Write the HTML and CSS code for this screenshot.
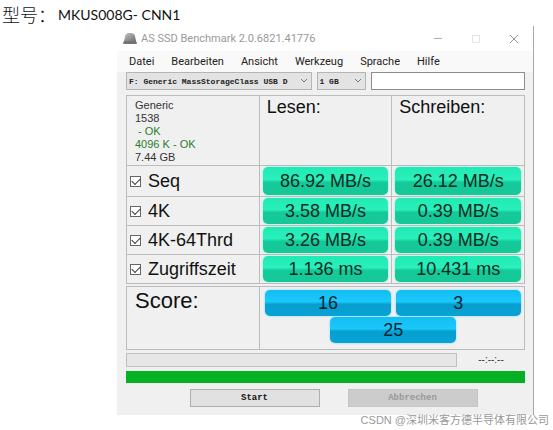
FILE: index.html
```html
<!DOCTYPE html>
<html lang="de">
<head>
    <meta charset="UTF-8">
    <meta name="viewport" content="width=device-width, initial-scale=1.0">
    <title>AS SSD Benchmark</title>
    <link rel="stylesheet" href="styles.css">
</head>
<body>
    <h1 class="model"><span class="model-label" lang="zh">型号：</span>MKUS008G- CNN1</h1>

    <main class="window">
        <!-- Title bar -->
        <header class="titlebar">
            <svg class="app-icon" width="14" height="12" viewBox="0 0 14 12" aria-hidden="true">
                <defs>
                    <linearGradient id="disk" x1="0" y1="0" x2="1" y2="1">
                        <stop offset="0" stop-color="#c4c4c4"/>
                        <stop offset="1" stop-color="#707070"/>
                    </linearGradient>
                </defs>
                <path d="M2 3 Q3 0 6 0 H8 Q11 0 12 3 L13 8 H1 Z" fill="url(#disk)"/>
                <path d="M1 8 H13 L14 10 Q14 11 13 11 H1 Q0 11 0 10 Z" fill="#747474"/>
            </svg>
            <span class="title">AS SSD Benchmark 2.0.6821.41776</span>
            <div class="controls">
                <button type="button" aria-label="Minimize">
                    <svg width="10" height="10" viewBox="0 0 10 10"><path d="M1 4.5H9" stroke="#aaa" fill="none"/></svg>
                </button>
                <button type="button" aria-label="Maximize">
                    <svg width="10" height="10" viewBox="0 0 10 10"><path d="M1.5 1.5H8.500V8.500H1.500Z" stroke="#e4e4e4" fill="none"/></svg>
                </button>
                <button type="button" aria-label="Close">
                    <svg width="10" height="10" viewBox="0 0 10 10"><path d="M1 1L9 9M9 1L1 9" stroke="#999" fill="none"/></svg>
                </button>
            </div>
        </header>

        <nav class="menu">
            <a href="#">Datei</a>
            <a href="#">Bearbeiten</a>
            <a href="#">Ansicht</a>
            <a href="#">Werkzeug</a>
            <a href="#">Sprache</a>
            <a href="#">Hilfe</a>
        </nav>

        <div class="content">
            <div class="toolbar">
                <div class="dropdown drive">
                    <select aria-label="Drive">
                        <option>F: Generic MassStorageClass USB D</option>
                    </select>
                    <svg width="8" height="6" viewBox="0 0 8 6"><path d="M1 1L4 4L7 1" stroke="#777" fill="none"/></svg>
                </div>
                <div class="dropdown size">
                    <select aria-label="Test size">
                        <option>1 GB</option>
                    </select>
                    <svg width="8" height="6" viewBox="0 0 8 6"><path d="M1 1L4 4L7 1" stroke="#777" fill="none"/></svg>
                </div>
                <input class="note" type="text" aria-label="Note">
            </div>

            <!-- Results -->
            <table class="results">
                <thead>
                    <tr>
                        <td class="info">
                            <p>Generic</p>
                            <p>1538</p>
                            <p class="ok">&nbsp;- OK</p>
                            <p class="ok">4096 K - OK</p>
                            <p>7.44 GB</p>
                        </td>
                        <th scope="col">Lesen:</th>
                        <th scope="col">Schreiben:</th>
                    </tr>
                </thead>
                <tbody>
                    <tr class="seq">
                        <th scope="row"><label><input type="checkbox" checked>Seq</label></th>
                        <td><div class="value">86.92 MB/s</div></td>
                        <td><div class="value">26.12 MB/s</div></td>
                    </tr>
                    <tr>
                        <th scope="row"><label><input type="checkbox" checked>4K</label></th>
                        <td><div class="value">3.58 MB/s</div></td>
                        <td><div class="value">0.39 MB/s</div></td>
                    </tr>
                    <tr>
                        <th scope="row"><label><input type="checkbox" checked>4K-64Thrd</label></th>
                        <td><div class="value">3.26 MB/s</div></td>
                        <td><div class="value">0.39 MB/s</div></td>
                    </tr>
                    <tr>
                        <th scope="row"><label><input type="checkbox" checked>Zugriffszeit</label></th>
                        <td><div class="value">1.136 ms</div></td>
                        <td><div class="value">10.431 ms</div></td>
                    </tr>
                </tbody>
            </table>

            <!-- Score -->
            <section class="score">
                <h2>Score:</h2>
                <div class="score-values">
                    <div class="value blue">16</div>
                    <div class="value blue">3</div>
                    <div class="value blue total">25</div>
                </div>
            </section>

            <div class="progress-row">
                <div class="progress"></div>
                <span class="time">--:--:--</span>
            </div>
            <div class="progress-full"></div>

            <div class="actions">
                <button type="button">Start</button>
                <button type="button" disabled>Abbrechen</button>
            </div>
        </div>
    </main>

    <p class="watermark" lang="zh">CSDN @深圳米客方德半导体有限公司</p>
</body>
</html>
```
FILE: styles.css
```css
:root {
    --face: #f0f0f0;
    --line: #bcbcbc;
    --ok: #2c7d2c;
}

* {
    box-sizing: border-box;
}

body {
    margin: 0;
    background-color: white;
    color: #111;
    font-family: "Liberation Sans", Arial, sans-serif;
}

.model {
    margin: 0;
    padding: 3px 2px 0;
    font-family: Lato, "Noto Sans CJK SC", sans-serif;
    font-size: 14px;
    font-weight: normal;
    line-height: 23px;
    display: flex;
}

.model-label {
    font-family: "Noto Sans CJK SC", sans-serif;
    font-size: 18px;
    font-weight: 300;
    margin-right: 2px;
}

.window {
    margin: 0 19px 0 117px;
    border-right: 1px solid #a8a8a8;
    background-color: var(--face);
}

/* Title bar */
.titlebar {
    display: flex;
    align-items: center;
    height: 25px;
    padding: 0 0 0 6px;
    background-color: white;
}

.title {
    margin-left: 4px;
    font-family: Roboto, sans-serif;
    font-size: 11px;
    color: #999;
    flex: 1;
}

.controls {
    display: flex;
}

.controls button {
    width: 38px;
    height: 24px;
    padding: 0;
    border: none;
    background: none;
    display: grid;
    place-items: center;
}

.menu {
    display: flex;
    gap: 17px;
    padding: 0 12px;
    background-color: #f9f9f9;
    line-height: 21px;
}

.menu a {
    font-family: Roboto, sans-serif;
    font-size: 11px;
    color: #222;
    text-decoration: none;
}

.content {
    padding: 0 8px 8px 9px;
}

/* Drive selection */
.toolbar {
    display: grid;
    grid-template-columns: 186fr 50fr 154fr;
    gap: 5px;
}

.dropdown {
    display: grid;
    align-items: center;
}

.dropdown select,
.dropdown svg {
    grid-area: 1 / 1;
}

.dropdown svg {
    justify-self: end;
    margin-right: 4px;
    pointer-events: none;
}

.dropdown select {
    appearance: none;
    width: 100%;
    height: 18px;
    padding: 0 0 0 2px;
    border: 1px solid #b5b5b5;
    border-radius: 0;
    background-color: #e3e3e3;
    color: #222;
    font-family: "Liberation Mono", monospace;
    font-size: 8px;
    font-weight: bold;
}

.note {
    width: 100%;
    height: 18px;
    border: 1px solid #8c8c8c;
    background-color: white;
}

/* Results */
.results {
    width: 100%;
    margin-top: 5px;
    border-collapse: collapse;
    table-layout: fixed;
}

.results th,
.results td {
    border: 1px solid var(--line);
    padding: 1px 3px;
    font-size: 18px;
    font-weight: normal;
    text-align: left;
}

.results thead th {
    padding: 0 7px;
    line-height: 22px;
    vertical-align: top;
}

.results .info {
    padding: 3px 8px 1px;
    font-size: 11px;
    line-height: 13px;
    color: #333;
}

.info p {
    margin: 0;
}

.results .info .ok {
    color: var(--ok);
}

.results label {
    display: flex;
    align-items: center;
    gap: 7px;
}

.results input {
    appearance: none;
    width: 11px;
    height: 11px;
    margin: 0;
    border: 1px solid #666;
    background-color: white;
    display: grid;
    place-items: center;
}

.results input:checked::before {
    content: "";
    width: 7px;
    height: 4px;
    margin-bottom: 2px;
    border-left: 1px solid #333;
    border-bottom: 1px solid #333;
    transform: rotate(-45deg);
}

.value {
    border-radius: 5px;
    background: linear-gradient(#20eab4, #2af0bb 45%, #14ca9a 55%, #17c797);
    box-shadow: 0 0 2px #5ff5cf;
    color: #0b2b22;
    font-size: 18px;
    line-height: 26px;
    text-align: center;
}

.seq .value {
    line-height: 28px;
}

/* Score */
.score {
    display: grid;
    grid-template-columns: 1fr 2fr;
    margin-top: 2px;
    border: 1px solid var(--line);
}

.score h2 {
    margin: 0;
    padding: 1px 8px;
    font-size: 22px;
    font-weight: normal;
    line-height: 26px;
}

.score-values {
    display: grid;
    grid-template-columns: repeat(4, 1fr);
    gap: 1px 5px;
    padding: 3px 3px 6px 5px;
    border-left: 1px solid var(--line);
}

.blue {
    grid-column: span 2;
    background: linear-gradient(#12bdf2, #1cc8fb 45%, #069fd0 55%, #08a2d4);
    box-shadow: 0 0 2px #5cd3f8;
    color: #06232e;
}

.total {
    grid-column: 2 / span 2;
}

/* Progress */
.progress-row {
    display: grid;
    grid-template-columns: 331fr 68fr;
    align-items: center;
    margin-top: 3px;
}

.progress {
    height: 14px;
    border: 1px solid #c0c0c0;
    background-color: #e6e6e6;
}

.time {
    font-size: 10px;
    line-height: 12px;
    text-align: center;
    color: #333;
}

.progress-full {
    height: 12px;
    margin-top: 4px;
    background-color: #06b025;
}

.actions {
    display: flex;
    justify-content: center;
    gap: 28px;
    margin-top: 6px;
    padding-left: 16px;
}

.actions button {
    width: 130px;
    height: 18px;
    padding: 0;
    border: 1px solid #adadad;
    background-color: #e1e1e1;
    color: #111;
    font-family: "Liberation Mono", monospace;
    font-size: 9px;
    font-weight: bold;
}

.actions button:disabled {
    border-color: #c4c4c4;
    background-color: #cccccc;
    color: #999;
}

.watermark {
    position: absolute;
    right: 4px;
    bottom: 2px;
    margin: 0;
    font-family: "Liberation Sans", "Noto Sans CJK SC", sans-serif;
    font-size: 11px;
    line-height: 16px;
    color: #999;
    text-shadow: 0 0 1px white;
}
```
